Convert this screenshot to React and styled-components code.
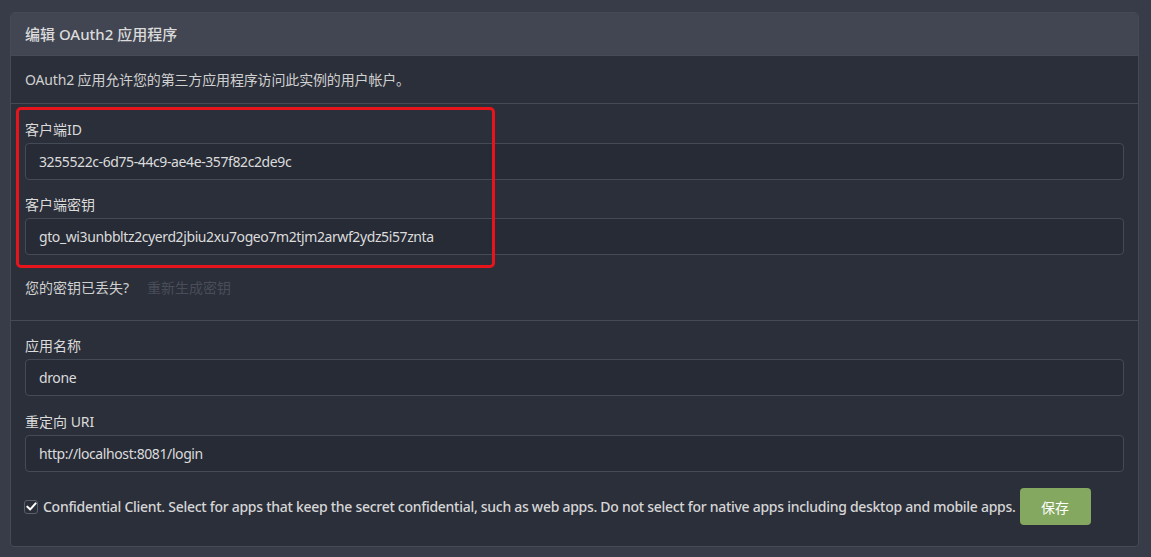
import React from "react";
import styled, { createGlobalStyle } from "styled-components";

const Global = createGlobalStyle`
  html, body { margin: 0; padding: 0; background: #383c48; }
  body {
    font-family: "Noto Sans", "Noto Sans CJK SC", sans-serif;
    font-size: 14px;
    color: #dbdbdb;
  }
  * { box-sizing: border-box; }
`;

const Page = styled.div`
  padding: 12px 12px 0 10px;
  height: 557px;
  overflow: hidden;
`;

const Card = styled.div`
  border: 1px solid #454a57;
  border-radius: 4px;
  background: #2b2f3a;
  overflow: hidden;
`;

const Header = styled.div`
  height: 42px;
  display: flex;
  align-items: center;
  padding: 0 14px 2px;
  background: #414652;
  font-size: 15px;
  font-weight: 500;
  color: #dbdbdb;
`;

const Segment = styled.div`
  position: relative;
  border-top: 1px solid #454a57;
  padding: ${(p) => p.$pad || "14px"};
  display: flex;
  flex-direction: column;
`;

const Desc = styled.p`
  margin: 0;
  line-height: 20px;
  font-size: 14px;
  letter-spacing: -0.15px;
  color: #d0d0d0;
`;

const Field = styled.div`
  display: flex;
  flex-direction: column;
  margin-bottom: ${(p) => p.$mb ?? 14}px;
`;

const Label = styled.label`
  font-size: 14px;
  line-height: 18px;
  margin-bottom: 4px;
  color: #dbdbdb;
`;

const Input = styled.input`
  height: 37px;
  width: 100%;
  background: #272b36;
  border: 1px solid #454a57;
  border-radius: 4px;
  padding: 0 14px 0 13px;
  font-family: inherit;
  font-size: 14px;
  letter-spacing: -0.4px;
  color: #dbdbdb;
  outline: none;
`;

const LostRow = styled.div`
  display: flex;
  gap: 18px;
  line-height: 20px;
  font-size: 14px;
  margin-top: 23px;
`;

const Muted = styled.span`
  color: #d0d0d0;
`;

const DarkLink = styled.a`
  color: #484d59;
  text-decoration: none;
`;

const Highlight = styled.div`
  position: absolute;
  left: 5px;
  top: 3px;
  width: 479px;
  height: 161px;
  border: 3px solid #e8141c;
  border-radius: 5px;
  pointer-events: none;
`;

const CheckRow = styled.div`
  display: flex;
  align-items: center;
  gap: 5px;
  margin-top: 16px;
`;

const Box = styled.span`
  width: 14px;
  height: 14px;
  margin-left: -1px;
  border: 1px solid #5a5f6c;
  border-radius: 3px;
  background: #2a2e39;
  display: inline-flex;
  align-items: center;
  justify-content: center;
  flex: none;
`;

const CheckText = styled.span`
  font-size: 14px;
  font-weight: 500;
  color: #d6d6d6;
  letter-spacing: -0.28px;
  white-space: nowrap;
`;

const Button = styled.button`
  margin-left: -1px;
  width: 71px;
  height: 37px;
  border: none;
  border-radius: 4px;
  background: #84a85f;
  color: #ffffff;
  font-family: inherit;
  font-size: 14px;
  flex: none;
`;

export default function App() {
  return (
    <>
      <Global />
      <Page>
        <Card>
          <Header>编辑 OAuth2 应用程序</Header>
          <Segment $pad="14px 14px 13px">
            <Desc>OAuth2 应用允许您的第三方应用程序访问此实例的用户帐户。</Desc>
          </Segment>
          <Segment $pad="17px 14px 22px">
            <Field $mb={16}>
              <Label>客户端ID</Label>
              <Input readOnly value="3255522c-6d75-44c9-ae4e-357f82c2de9c" />
            </Field>
            <Field $mb={0}>
              <Label>客户端密钥</Label>
              <Input readOnly value="gto_wi3unbbltz2cyerd2jbiu2xu7ogeo7m2tjm2arwf2ydz5i57znta" />
            </Field>
            <LostRow>
              <Muted>您的密钥已丢失?</Muted>
              <DarkLink href="#">重新生成密钥</DarkLink>
            </LostRow>
            <Highlight />
          </Segment>
          <Segment $pad="16px 14px 21px">
            <Field $mb={17}>
              <Label>应用名称</Label>
              <Input readOnly value="drone" />
            </Field>
            <Field $mb={0}>
              <Label>重定向 URI</Label>
              <Input readOnly value="http://localhost:8081/login" />
            </Field>
            <CheckRow>
              <Box>
                <svg width="11" height="11" viewBox="0 0 12 12">
                  <path d="M1.5 6.2 L4.6 9.2 L10.5 2.6" fill="none" stroke="#ffffff" strokeWidth="2.2" strokeLinecap="round" strokeLinejoin="round" />
                </svg>
              </Box>
              <CheckText>
                Confidential Client. Select for apps that keep the secret confidential, such as web apps. Do not select for native apps including desktop and mobile apps.
              </CheckText>
              <Button>保存</Button>
            </CheckRow>
          </Segment>
        </Card>
      </Page>
    </>
  );
}
